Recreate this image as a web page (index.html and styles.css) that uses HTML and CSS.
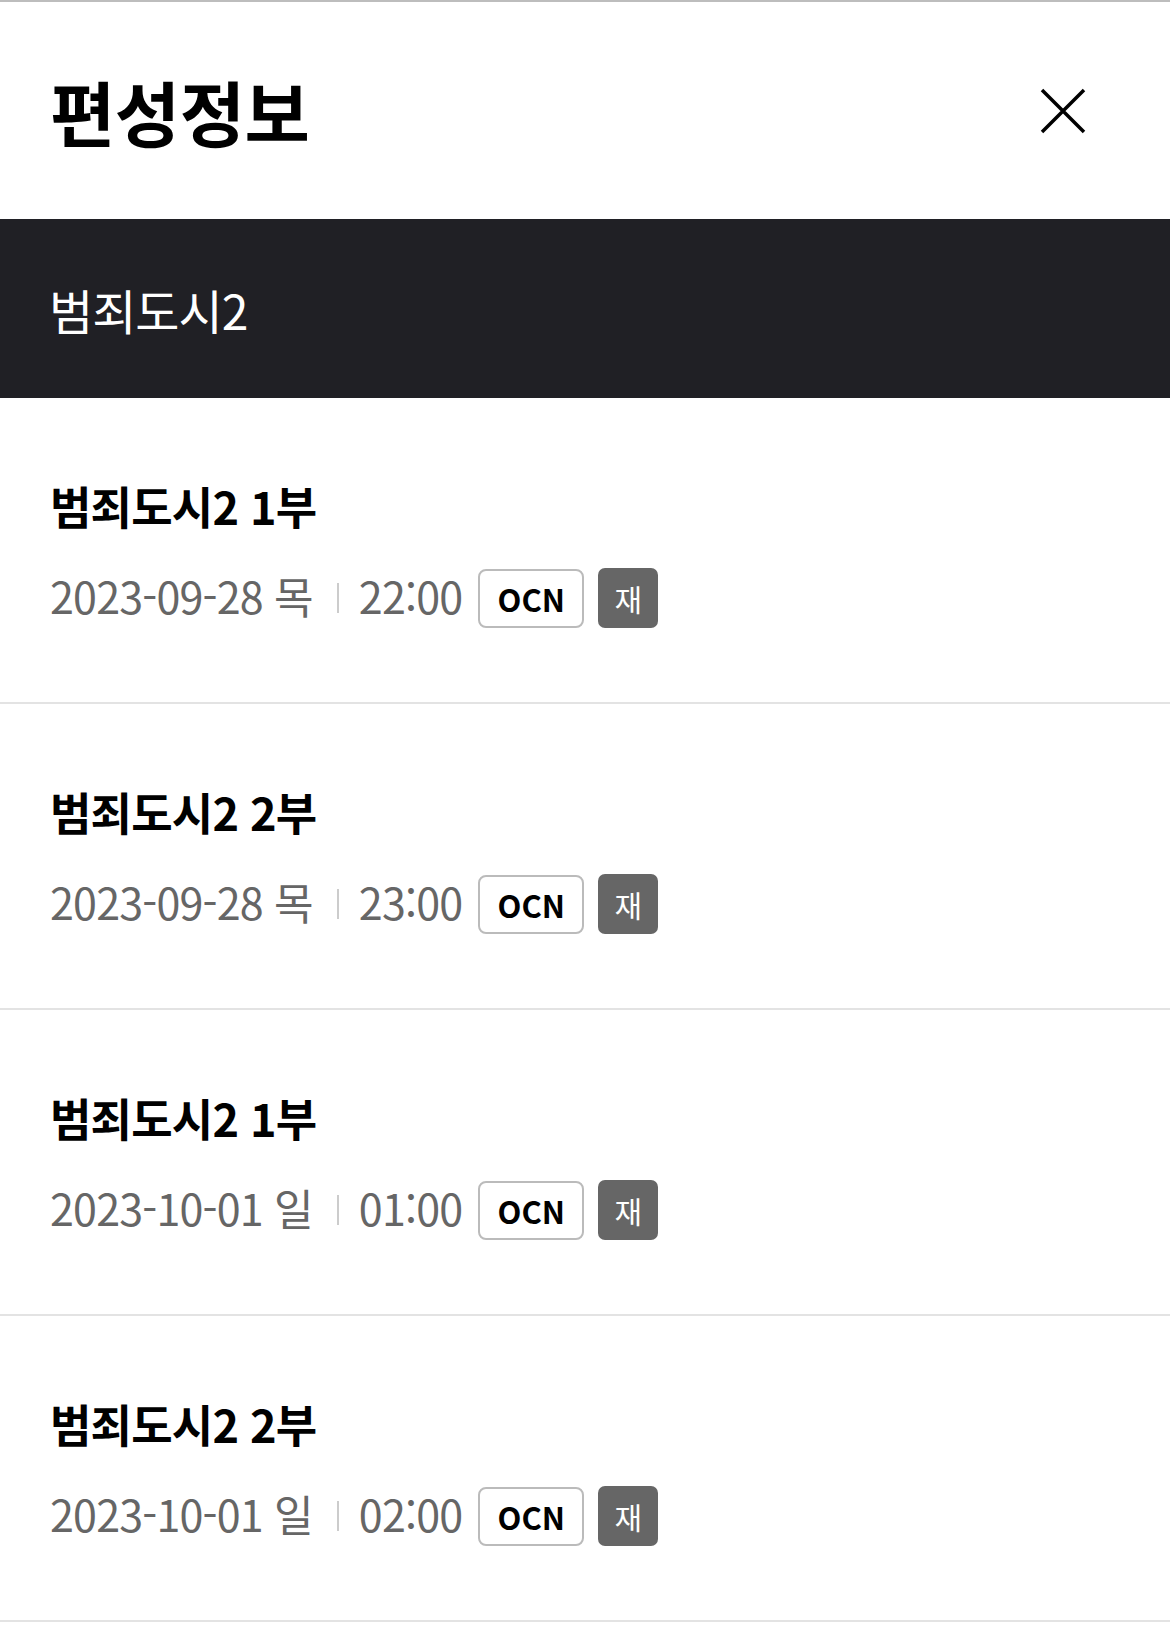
FILE: index.html
```html
<!DOCTYPE html>
<html lang="ko">
<head>
    <meta charset="UTF-8">
    <meta name="viewport" content="width=device-width, initial-scale=1.0">
    <title>편성정보</title>
    <link rel="stylesheet" href="styles.css">
</head>
<body>
    <div class="header">
        <h1>편성정보</h1>
        <button class="close" type="button" aria-label="닫기">
            <svg width="46" height="46" viewBox="0 0 46 46">
                <path d="M2 2 L44 44 M44 2 L2 44" stroke="#000" stroke-width="3.5" fill="none"/>
            </svg>
        </button>
    </div>

    <div class="program">범죄도시2</div>

    <ul class="schedule">
        <li class="item">
            <p class="item-title">범죄도시2 1부</p>
            <div class="meta">
                <span class="date">2023-09-28 목</span>
                <span class="sep"></span>
                <span class="time">22:00</span>
                <span class="channel">OCN</span>
                <span class="rerun">재</span>
            </div>
        </li>
        <li class="item">
            <p class="item-title">범죄도시2 2부</p>
            <div class="meta">
                <span class="date">2023-09-28 목</span>
                <span class="sep"></span>
                <span class="time">23:00</span>
                <span class="channel">OCN</span>
                <span class="rerun">재</span>
            </div>
        </li>
        <li class="item">
            <p class="item-title">범죄도시2 1부</p>
            <div class="meta">
                <span class="date">2023-10-01 일</span>
                <span class="sep"></span>
                <span class="time">01:00</span>
                <span class="channel">OCN</span>
                <span class="rerun">재</span>
            </div>
        </li>
        <li class="item">
            <p class="item-title">범죄도시2 2부</p>
            <div class="meta">
                <span class="date">2023-10-01 일</span>
                <span class="sep"></span>
                <span class="time">02:00</span>
                <span class="channel">OCN</span>
                <span class="rerun">재</span>
            </div>
        </li>
    </ul>
</body>
</html>
```

FILE: styles.css
```css
body {
    margin: 0;
    font-family: 'Noto Sans CJK KR', 'Noto Sans', sans-serif;
    color: #000;
    background: #fff;
}

.header {
    display: flex;
    justify-content: space-between;
    align-items: center;
    height: 217px;
    padding: 0 84px 0 50px;
    border-top: 2px solid #bdbdbd;
}

.header h1 {
    margin: 0;
    font-size: 71px;
    font-weight: 700;
    letter-spacing: -0.5px;
    line-height: 1;
}

.close {
    border: none;
    background: none;
    padding: 0;
    width: 46px;
    height: 46px;
    cursor: pointer;
}

.close svg {
    display: block;
}

.program {
    display: flex;
    align-items: center;
    height: 179px;
    padding-left: 49px;
    background-color: #202025;
    color: #fff;
    font-size: 48px;
    letter-spacing: -1px;
}

.schedule {
    list-style: none;
    margin: 0;
    padding: 0;
}

.item {
    padding: 78px 50px 74px;
    border-bottom: 2px solid #e3e3e3;
}

.item-title {
    margin: 0;
    font-size: 45px;
    font-weight: 700;
    line-height: 60px;
    letter-spacing: -0.8px;
}

.meta {
    display: flex;
    align-items: center;
    height: 60px;
    margin-top: 32px;
    color: #666;
    font-size: 43px;
    letter-spacing: -0.8px;
}

.date,
.time {
    padding-bottom: 7px;
}

.sep {
    width: 2px;
    height: 30px;
    margin: 0 20px 0 24px;
    background-color: #ccc;
}

.channel {
    display: flex;
    align-items: center;
    justify-content: center;
    box-sizing: border-box;
    width: 106px;
    height: 59px;
    margin-left: 16px;
    border: 2px solid #bbb;
    border-radius: 8px;
    color: #000;
    font-size: 31px;
    font-weight: 700;
    letter-spacing: 0;
}

.rerun {
    display: flex;
    align-items: center;
    justify-content: center;
    width: 60px;
    height: 60px;
    margin-left: 14px;
    border-radius: 7px;
    background-color: #666;
    color: #fff;
    font-size: 30px;
    letter-spacing: 0;
}
```
